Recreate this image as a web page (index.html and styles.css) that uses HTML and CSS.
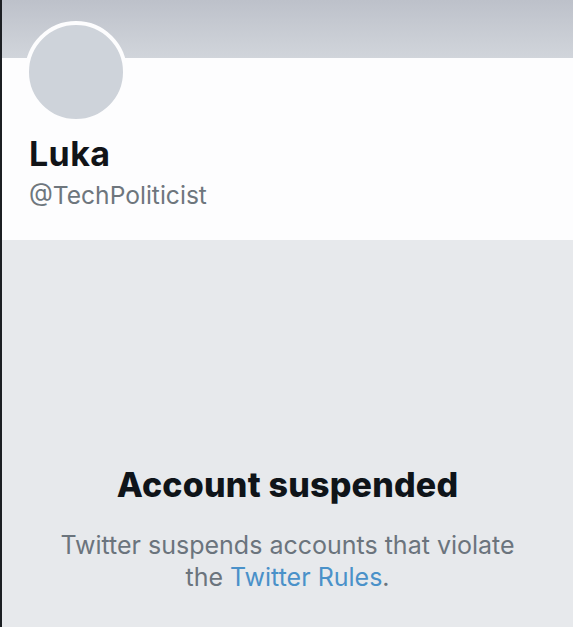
FILE: index.html
```html
<!DOCTYPE html>
<html>
<head>
<meta charset="utf-8">
<link rel="stylesheet" href="styles.css">
</head>
<body>
<div class="page">
  <div class="banner"></div>
  <div class="profile">
    <div class="avatar"></div>
    <div class="name">Luka</div>
    <div class="handle">@TechPoliticist</div>
  </div>
  <div class="suspended">
    <h1 class="title">Account suspended</h1>
    <p class="desc">Twitter suspends accounts that violate<br>the <a class="link" href="#">Twitter Rules</a>.</p>
  </div>
</div>
</body>
</html>
```
FILE: styles.css
```css
html, body {
  margin: 0;
  padding: 0;
  height: 100%;
}
body {
  font-family: Inter, "Noto Sans", sans-serif;
  background: #e7e9ec;
}
.page {
  display: flex;
  flex-direction: column;
  height: 627px;
  border-left: 2px solid #1c1f23;
  box-sizing: border-box;
}
.banner {
  height: 58px;
  background: linear-gradient(#bdc1ca, #d1d5db);
  flex: none;
}
.profile {
  background: #fdfdfe;
  height: 182px;
  flex: none;
  padding-left: 27px;
  box-sizing: border-box;
}
.avatar {
  width: 94px;
  height: 94px;
  border-radius: 50%;
  background: #ced3da;
  border: 4px solid #fdfdfe;
  margin-top: -37px;
  margin-left: -4px;
}
.name {
  font-weight: 700;
  font-size: 34px;
  line-height: 40px;
  color: #111418;
  margin-top: 11px;
  letter-spacing: 0.4px;
}
.handle {
  font-size: 24.6px;
  line-height: 32px;
  color: #6e767d;
  margin-top: 5px;
}
.suspended {
  flex: 1;
  display: flex;
  flex-direction: column;
  align-items: center;
  text-align: center;
  background: #e7e9ec;
}
.title {
  margin: 225px 0 0;
  font-size: 34px;
  line-height: 40px;
  font-weight: 800;
  color: #0f1419;
  letter-spacing: 0.2px;
}
.desc {
  margin: 24px 0 0;
  font-size: 25px;
  line-height: 32px;
  color: #6b747d;
}
.link {
  color: #4a91c9;
  text-decoration: none;
}
```
